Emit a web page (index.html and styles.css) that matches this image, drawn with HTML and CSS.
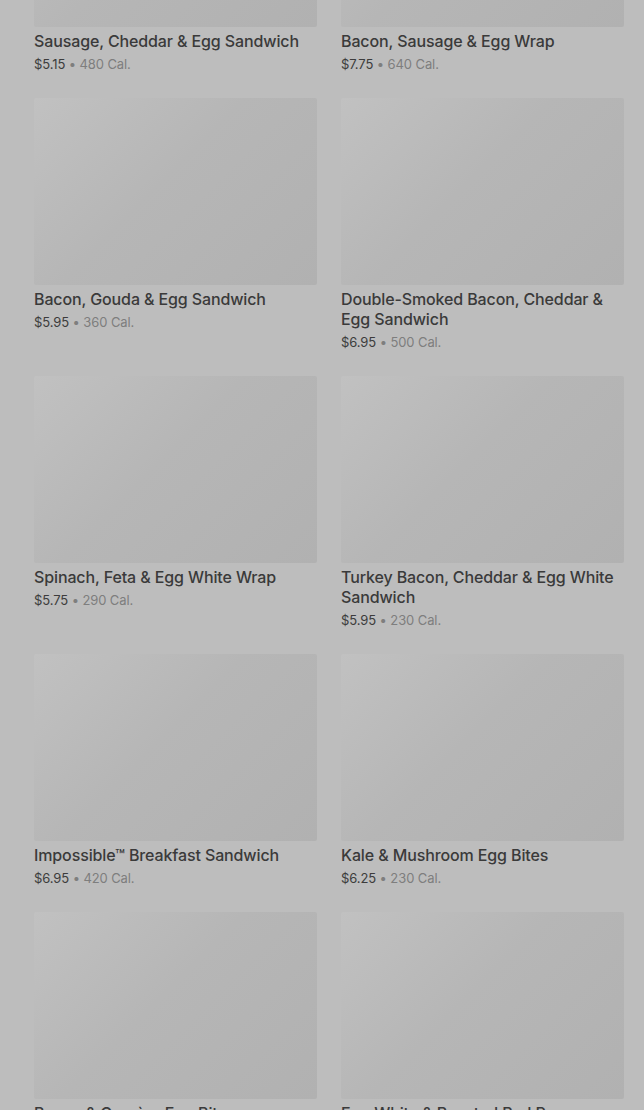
FILE: index.html
```html
<!DOCTYPE html>
<html lang="en">
<head>
    <meta charset="UTF-8">
    <meta name="viewport" content="width=device-width, initial-scale=1.0">
    <title>Breakfast Menu</title>
    <link rel="stylesheet" href="styles.css">
</head>
<body>
    <div class="menu">
        <div class="menu-grid">
            <div class="item">
                <div class="item-photo"></div>
                <div class="item-name">Sausage, Cheddar &amp; Egg Sandwich</div>
                <div class="item-meta"><span class="price">$5.15</span> • 480 Cal.</div>
            </div>
            <div class="item">
                <div class="item-photo"></div>
                <div class="item-name">Bacon, Sausage &amp; Egg Wrap</div>
                <div class="item-meta"><span class="price">$7.75</span> • 640 Cal.</div>
            </div>
            <div class="item">
                <div class="item-photo"></div>
                <div class="item-name">Bacon, Gouda &amp; Egg Sandwich</div>
                <div class="item-meta"><span class="price">$5.95</span> • 360 Cal.</div>
            </div>
            <div class="item">
                <div class="item-photo"></div>
                <div class="item-name">Double-Smoked Bacon, Cheddar &amp; Egg Sandwich</div>
                <div class="item-meta"><span class="price">$6.95</span> • 500 Cal.</div>
            </div>
            <div class="item">
                <div class="item-photo"></div>
                <div class="item-name">Spinach, Feta &amp; Egg White Wrap</div>
                <div class="item-meta"><span class="price">$5.75</span> • 290 Cal.</div>
            </div>
            <div class="item">
                <div class="item-photo"></div>
                <div class="item-name">Turkey Bacon, Cheddar &amp; Egg White Sandwich</div>
                <div class="item-meta"><span class="price">$5.95</span> • 230 Cal.</div>
            </div>
            <div class="item">
                <div class="item-photo"></div>
                <div class="item-name">Impossible™ Breakfast Sandwich</div>
                <div class="item-meta"><span class="price">$6.95</span> • 420 Cal.</div>
            </div>
            <div class="item">
                <div class="item-photo"></div>
                <div class="item-name">Kale &amp; Mushroom Egg Bites</div>
                <div class="item-meta"><span class="price">$6.25</span> • 230 Cal.</div>
            </div>
            <div class="item">
                <div class="item-photo"></div>
                <div class="item-name">Bacon &amp; Gruyère Egg Bites</div>
                <div class="item-meta"><span class="price">$5.45</span> • 300 Cal.</div>
            </div>
            <div class="item">
                <div class="item-photo"></div>
                <div class="item-name">Egg White &amp; Roasted Red Pepper Egg Bites</div>
                <div class="item-meta"><span class="price">$5.25</span> • 170 Cal.</div>
            </div>
        </div>
    </div>
</body>
</html>
```

FILE: styles.css
```css
html, body {
    margin: 0;
    height: 100%;
    overflow: hidden;
}
body {
    font-family: Inter, "Noto Sans", sans-serif;
    background-color: #bdbdbd;
    color: #3a3a3a;
}
.menu {
    padding: 0 20px 0 34px;
}
.menu-grid {
    display: grid;
    grid-template-columns: 1fr 1fr;
    column-gap: 24px;
    row-gap: 25px;
    margin-top: -160px;
}
.item-photo {
    height: 187px;
    border-radius: 2px;
    background: linear-gradient(135deg, #c1c1c1 0%, #b6b6b6 45%, #b1b1b1 100%);
}
.item-name {
    margin-top: 4px;
    padding-right: 4px;
    font-size: 16px;
    line-height: 20px;
    font-weight: 500;
    letter-spacing: -0.12px;
    color: #3a3a3a;
}
.item-meta {
    margin-top: 4px;
    font-size: 13px;
    line-height: 18px;
    letter-spacing: -0.1px;
    color: #7e7e7e;
}
.price {
    color: #3c3c3c;
}
```
